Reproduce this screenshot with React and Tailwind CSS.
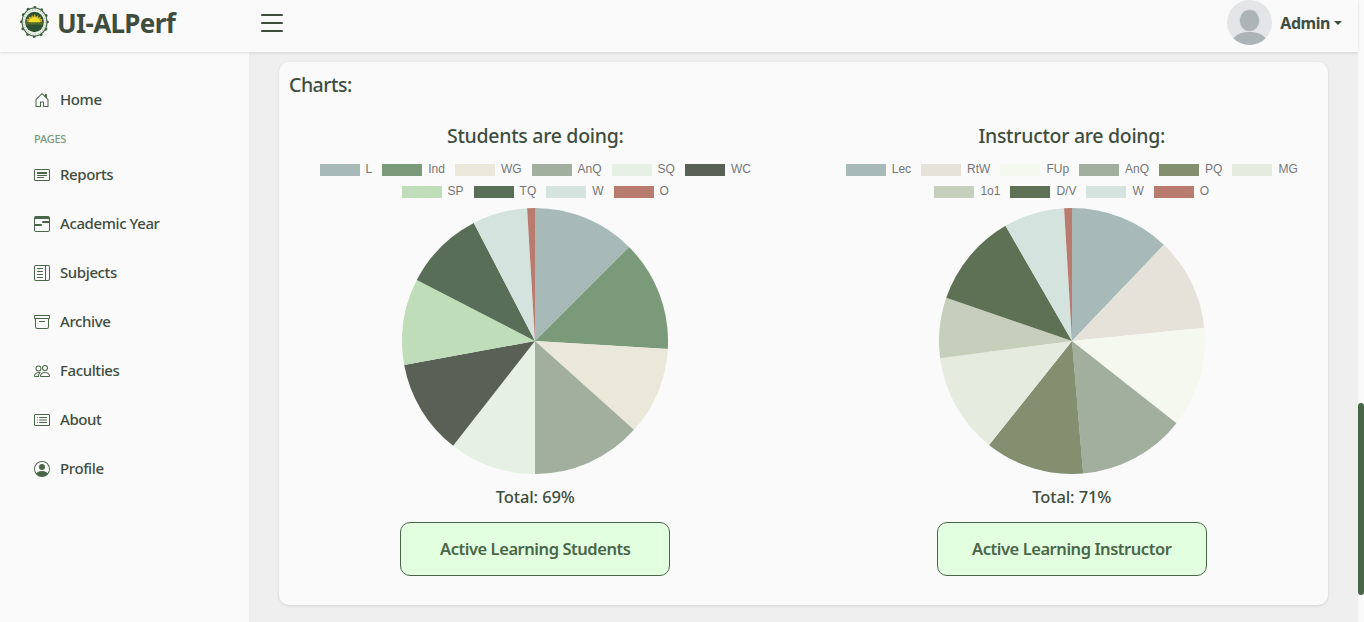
import {
  BsHouseDoor, BsCardHeading, BsCalendar3Range, BsLayoutTextSidebar,
  BsArchive, BsPeople, BsCardList, BsPersonCircle, BsList,
} from 'react-icons/bs';

const students = {
  title: 'Students are doing:',
  total: 'Total: 69%',
  button: 'Active Learning Students',
  rows: [6, 4],
  slices: [
    ['L', '#a8bab8', 45], ['Ind', '#7b9a79', 93.4], ['WG', '#e9e8d9', 131.9], ['AnQ', '#a2ae9e', 180],
    ['SQ', '#e6f0e4', 218], ['WC', '#596156', 259.6], ['SP', '#bfddb9', 297.3], ['TQ', '#596e56', 332.6],
    ['W', '#d5e3de', 356.6], ['O', '#b87b6d', 360],
  ],
};

const instructor = {
  title: 'Instructor are doing:',
  total: 'Total: 71%',
  button: 'Active Learning Instructor',
  rows: [6, 4],
  slices: [
    ['Lec', '#a8bab8', 43.7], ['RtW', '#e5e2da', 84.3], ['FUp', '#f5f8ee', 128.2], ['AnQ', '#a2ae9e', 175.2],
    ['PQ', '#838f6f', 218.6], ['MG', '#e5ebdf', 262.5], ['1o1', '#c6cfbc', 289], ['D/V', '#5f7154', 330],
    ['W', '#d5e3de', 356.6], ['O', '#b87b6d', 360],
  ],
};

const links = [
  [BsCardHeading, 'Reports'],
  [BsCalendar3Range, 'Academic Year'],
  [BsLayoutTextSidebar, 'Subjects'],
  [BsArchive, 'Archive'],
  [BsPeople, 'Faculties'],
  [BsCardList, 'About'],
  [BsPersonCircle, 'Profile'],
];

const point = (deg) => {
  const a = (deg * Math.PI) / 180;
  return `${133 + 133 * Math.sin(a)} ${133 - 133 * Math.cos(a)}`;
};

function Pie({ slices }) {
  return (
    <svg width="266" height="266" viewBox="0 0 266 266" className="mt-[10px] shrink-0">
      {slices.map(([label, color, end], i) => {
        const start = i ? slices[i - 1][2] : 0;
        return <path key={label} fill={color} d={`M133 133L${point(start)}A133 133 0 0 1 ${point(end)}Z`} />;
      })}
    </svg>
  );
}

function Legend({ slices, rows }) {
  const groups = [slices.slice(0, rows[0]), slices.slice(rows[0])];
  return (
    <div className="mt-[16px] flex flex-col gap-[10px] font-['Liberation_Sans',sans-serif] text-[12px] leading-[12px] text-[#757575]">
      {groups.map((group, i) => (
        <div key={i} className="flex h-3 justify-center gap-[10px]">
          {group.map(([label, color]) => (
            <div key={label} className="flex gap-[6px]">
              <svg width="40" height="12"><rect width="40" height="12" fill={color} /></svg>
              <span className="-mt-px">{label}</span>
            </div>
          ))}
        </div>
      ))}
    </div>
  );
}

function Chart({ data }) {
  return (
    <section className="flex flex-1 flex-col items-center">
      <h2 className="text-[19.5px] leading-6 font-medium tracking-[-0.3px]">{data.title}</h2>
      <Legend slices={data.slices} rows={data.rows} />
      <Pie slices={data.slices} />
      <p className="mt-[11px] text-[16.5px] leading-6 font-medium tracking-[-0.1px]">{data.total}</p>
      <button className="mt-[13px] h-[54px] w-[270px] rounded-[10px] border border-[#4a6648] bg-[#e2ffdf] text-[16.5px] font-semibold tracking-[-0.45px] text-[#4a6648]">
        {data.button}
      </button>
    </section>
  );
}

function NavItem({ icon: Icon, label }) {
  return (
    <a className="flex h-[49px] items-center pl-[34px]">
      <Icon size={16} className="text-[#4a6648]" />
      <span className="mb-px ml-[10px] text-[15px] leading-6 font-medium tracking-[-0.4px]">{label}</span>
    </a>
  );
}

function Seal() {
  return (
    <svg width="30" height="34" viewBox="0 0 30 34">
      <ellipse cx="15.5" cy="17" rx="13" ry="14.6" fill="#3d5f40" />
      <ellipse cx="15.5" cy="17" rx="12.9" ry="14.6" fill="none" stroke="#3d5f40" strokeWidth="3" strokeLinecap="round" strokeDasharray="0.1 7.1" />
      <ellipse cx="15.5" cy="17" rx="11.9" ry="13.4" fill="#f0f3e9" />
      <ellipse cx="15.5" cy="17" rx="10.8" ry="12.2" fill="none" stroke="#b3beaf" strokeWidth="1.1" strokeDasharray="1.2 1.5" />
      <ellipse cx="15.5" cy="17" rx="9.4" ry="10.2" fill="#2d5132" />
      <path d="M7 17.3 8.5 16 7.3 13.7 9.9 14 9.7 11.2 12.2 12.6 13 9.7 14.5 12 15.7 8.8 17 12 19.1 9.9 19.2 12.8 22 11.6 21.3 14 23.6 14 22.5 16 24 17.3Z" fill="#c8ae27" />
      <path d="M10 17.3a5.5 5 0 0 1 11 0Z" fill="#f4dc2a" />
      <path d="M7 18.2h17v1.3H7Z" fill="#5e752a" />
    </svg>
  );
}

function Avatar() {
  return (
    <svg width="45" height="45" viewBox="0 0 45 45">
      <defs><clipPath id="avatar-clip"><circle cx="22.5" cy="22.5" r="22.5" /></clipPath></defs>
      <g clipPath="url(#avatar-clip)">
        <rect width="45" height="45" fill="#e3e5e7" />
        <path d="M6 39C10 33.5 16 32 22.5 32S35 33.5 39 39V45H6Z" fill="#adb4b8" />
        <ellipse cx="22.5" cy="20.5" rx="10" ry="11" fill="#adb4b8" stroke="#e3e5e7" strokeWidth="0.6" />
      </g>
    </svg>
  );
}

export default function App() {
  return (
    <div className="flex h-[622px] w-[1364px] overflow-hidden bg-[#fafafa] font-['Noto_Sans','Open_Sans',sans-serif] text-[#3f4d3f]">
      <div className="flex w-[1358px] flex-col">
        <header className="z-10 flex h-[52px] shrink-0 items-start bg-[#fafafa] shadow-[0_1px_3px_rgba(0,0,0,0.12)]">
          <div className="flex w-[256px] pt-[5px] pl-[19px]">
            <Seal />
            <h1 className="ml-[8px] pt-px text-[26px] leading-[34px] font-bold tracking-[-0.65px]">UI-ALPerf</h1>
          </div>
          <BsList size={32} className="mt-[7px]" />
          <div className="ml-auto flex items-center pr-[16px]">
            <Avatar />
            <span className="ml-[8px] text-[16px] font-bold tracking-[-0.45px]">Admin</span>
            <svg width="8" height="4" viewBox="0 0 8 4" className="ml-[4px]"><path d="M0 0h8L4 4Z" fill="currentColor" /></svg>
          </div>
        </header>
        <div className="flex min-h-0 flex-1">
          <nav className="flex w-[249px] shrink-0 flex-col bg-[#fafafa] pt-[23px] shadow-[0_0_3px_rgba(0,0,0,0.15)]">
            <NavItem icon={BsHouseDoor} label="Home" />
            <p className="mt-[4px] mb-px h-[21px] pl-[34px] text-[11px] leading-[21px] font-medium tracking-[-0.25px] text-[#7b9a79]">PAGES</p>
            {links.map(([icon, label]) => <NavItem key={label} icon={icon} label={label} />)}
          </nav>
          <main className="flex-1 bg-[#efefef] pt-[10px] pr-[30px] pl-[30px]">
            <div className="h-[543px] rounded-[10px] bg-[#fafafa] pt-[11px] shadow-[0_1px_3px_rgba(0,0,0,0.12)]">
              <h2 className="pl-[10px] text-[19.5px] leading-6 font-medium tracking-[-0.5px]">Charts:</h2>
              <div className="-mx-3 mt-[27px] flex">
                <Chart data={students} />
                <Chart data={instructor} />
              </div>
            </div>
          </main>
        </div>
      </div>
      <div className="flex flex-1 flex-col bg-[#fafafa] pt-[403px]">
        <div className="h-[192px] rounded-[3px] bg-[#4a6648]" />
      </div>
    </div>
  );
}
